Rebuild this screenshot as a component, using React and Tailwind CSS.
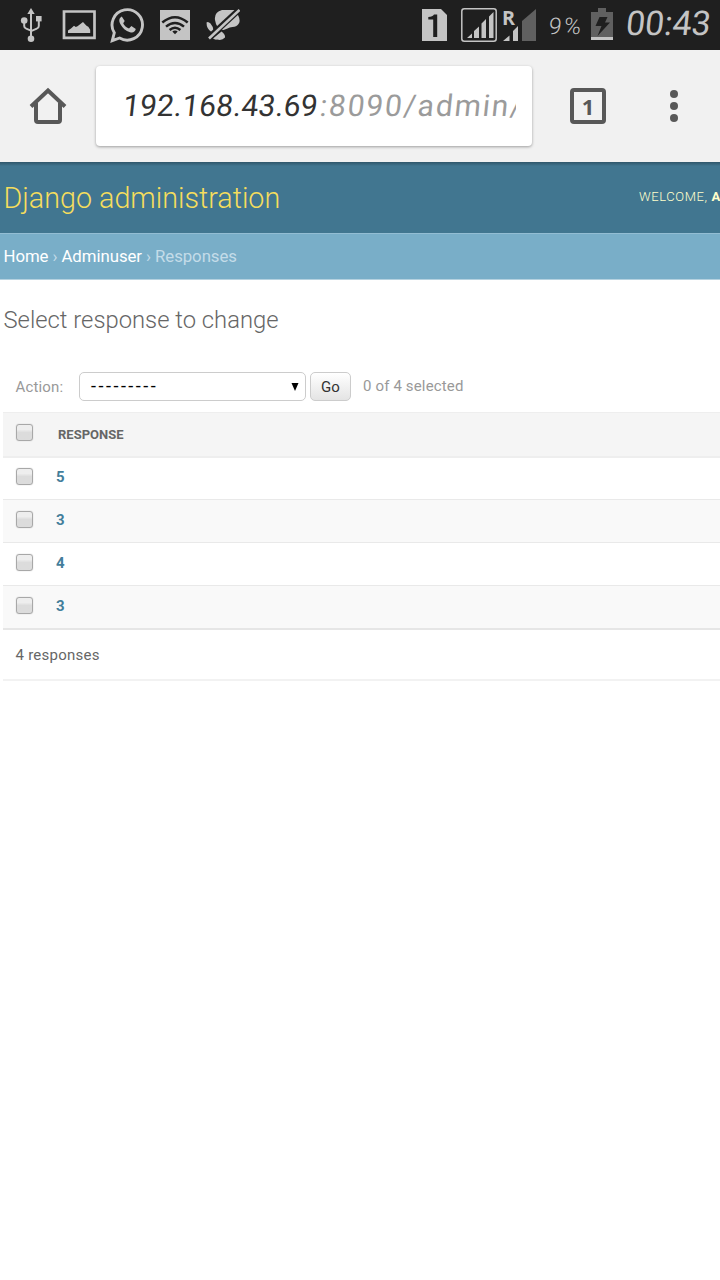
const StatusBar = () => (
  <div className="flex h-[50px] shrink-0 items-center bg-[#1f1f1f] text-[#c4c4c4]">
    <svg className="ml-5 h-[50px] w-[22px] shrink-0" viewBox="20 0 22 50" fill="currentColor">
      <path d="M31 8l3.7 6h-7.4z" />
      <circle cx="31" cy="38.8" r="3.3" />
      <circle cx="24.2" cy="20.5" r="3.3" />
      <rect x="36" y="16" width="5.6" height="5.4" />
      <path d="M31 12v25M24.2 21v5q0 2 2 2.6l4.8 2M38.8 20v6q0 2-2 2.6l-5.8 2.6" fill="none" stroke="currentColor" strokeWidth="2" />
    </svg>
    <svg className="ml-[20px] h-[50px] w-[34px] shrink-0" viewBox="62 0 34 50" fill="currentColor">
      <path d="M64 11.500h30.500v26.300H64z" fill="none" stroke="currentColor" strokeWidth="2.700" />
      <path d="M68 33v-2.500l3-2 3-2.800 1.800 1.200 1.700-.7 5.500-4.200 3.500 3.800 1.800 1 1.900 3V33z" />
    </svg>
    <svg className="ml-[14px] h-[50px] w-[34px] shrink-0" viewBox="110 0 34 50">
      <path d="M112.300 40.700l2-7.900a15.200 15.200 0 1 1 5.300 5.200z" fill="none" stroke="currentColor" strokeWidth="2.900" />
      <path d="M121.800 16.600c-3 1.700-3 4.600-1.500 7.400 2.200 4.100 5.300 6.900 9.700 8.200 3.100.9 5-.3 5.800-3.200l-4.400-3-2.400 2.500c-3-1-5-3.200-5.800-5.300l1.500-2.200z" fill="currentColor" />
    </svg>
    <svg className="ml-4 h-[50px] w-[30px] shrink-0" viewBox="160 0 30 50">
      <rect x="160" y="10" width="30" height="30" fill="currentColor" />
      <g fill="none" stroke="#1f1f1f" strokeWidth="2.500">
        <path d="M162.300 22.500q12.700-10.500 25.400 0M166 26.600q9-7.300 18 0M169.600 30q5.400-4.500 10.800 0" />
      </g>
      <path d="M175 34.200l-2.700-2.600q2.700-2 5.400 0z" fill="#1f1f1f" />
    </svg>
    <svg className="ml-4 h-[50px] w-[34px] shrink-0" viewBox="206 0 34 50" fill="currentColor">
      <path d="M215 20q-1-8 7-10h14q2 1 2 5 3 6 .5 9-2 3-6 3-3 0-5 1.500l-4 1.500q-7 0-8.500-10z" />
      <path d="M206.500 22.500q1.500-1.500 4 1 3 3.500 3 7 0 3-2 1.500-5-3-5-9.500zM213 38.500l8.500-7q4 3 3.500 6-3 3.500-8 2-2 .5-4-1z" />
      <path d="M207 39.500L240 9" stroke="#1f1f1f" strokeWidth="6" />
      <path d="M209 38.500L239.500 10" stroke="currentColor" strokeWidth="2.600" />
    </svg>
    <svg className="ml-[182px] h-[50px] w-[25px] shrink-0" viewBox="422 0 25 50">
      <path d="M422 9h19l6 6v26h-25z" fill="currentColor" />
      <path d="M433.200 37V19.500h-4.900v-2.500q4.500-.3 5.700-2.500h3.200V37z" fill="#1f1f1f" />
    </svg>
    <svg className="ml-[14px] h-[50px] w-[36px] shrink-0" viewBox="461 0 36 50" fill="currentColor">
      <rect x="461.800" y="8.800" width="34.400" height="32.400" rx="2.500" fill="none" stroke="currentColor" strokeWidth="1.500" />
      <path d="M467 38l5-4.500V38zM474 38v-7l5-4.500V38zM481.500 38V23.500l4.500-4.500V38zM489 38V16.500l4.500-4.500V38z" />
    </svg>
    <svg className="ml-[5px] h-[50px] w-[35px] shrink-0" viewBox="502 0 35 50">
      <path d="M522 41V21L536 9v32z" fill="#606060" />
      <path d="M503 41l6.500-5.500v5.500zM513 41V31l5-5v15z" fill="currentColor" />
      <text x="502" y="24.500" fontFamily="Open Sans, sans-serif" fontWeight="700" fontSize="20" textLength="13" lengthAdjust="spacingAndGlyphs" fill="currentColor">R</text>
    </svg>
    <span className="ml-[12px] w-[36px] shrink-0 -skew-x-6 whitespace-nowrap pt-[3px] text-[23px] leading-[50px] font-light tracking-[2.5px]">9%</span>
    <svg className="ml-[6px] h-[50px] w-[22px] shrink-0" viewBox="591 0 22 50">
      <path d="M591 12h7V8h8v4h7v25h-22z" fill="#606060" />
      <path d="M591 37h22v3h-22z" fill="currentColor" />
      <path d="M599.500 17h8l-2.500 5.500h5L597.500 36l4-10h-6z" fill="#1f1f1f" />
    </svg>
    <span className="ml-[13px] shrink-0 -skew-x-6 whitespace-nowrap pb-1 text-[34px] leading-[46px]">00:43</span>
  </div>
);

const BrowserBar = () => (
  <div className="flex h-28 shrink-0 items-start bg-[#f1f1f1] text-[#585858]">
    <svg className="ml-[29px] mt-9 h-10 w-[38px] shrink-0" viewBox="29 86 38 40" fill="none" stroke="currentColor" strokeWidth="4">
      <path d="M31 106.500L48 90.500 65 106.500" />
      <path d="M36 103v17q0 2 2 2h20q2 0 2-2v-17" />
    </svg>
    <div className="ml-[29px] mt-4 flex h-20 w-[436px] shrink-0 items-center overflow-hidden rounded-[4px] bg-white pr-4 pl-[27px] shadow-[0_1px_3px_rgba(0,0,0,0.35)]">
      <div className="w-full overflow-hidden whitespace-nowrap text-[30px] leading-10">
        <div className="flex -skew-x-6">
          <span className="w-[197px] shrink-0 tracking-[0.2px] text-[#333]">192.168.43.69</span>
          <span className="tracking-[1.8px] text-[#9b9b9b]">:8090/admin/</span>
        </div>
      </div>
    </div>
    <div className="ml-[38px] mt-[38px] flex h-9 w-9 shrink-0 items-center justify-center rounded-[4px] border-4 border-[#585858] pb-px font-['Noto_Sans',sans-serif] text-[22px] leading-7 font-bold">1</div>
    <div className="ml-16 mt-10 flex flex-col gap-1">
      <i className="h-2 w-2 rounded-full bg-[#585858]" />
      <i className="h-2 w-2 rounded-full bg-[#585858]" />
      <i className="h-2 w-2 rounded-full bg-[#585858]" />
    </div>
  </div>
);

const CheckBox = () => (
  <span className="h-[17px] w-[17px] shrink-0 rounded-[3px] border border-[#a8a8a8] bg-linear-to-b from-[#eee] from-30% to-[#dcdcdc] to-50% shadow-[0_0_1px_#aaa]" />
);

const rows = [
  { value: "5", cls: "h-[41px] bg-white pb-1" },
  { value: "3", cls: "h-[43px] border-t border-[#e9e9e9] bg-[#f9f9f9] pb-[3px]" },
  { value: "4", cls: "h-[43px] border-t border-[#e9e9e9] bg-white pb-[3px]" },
  { value: "3", cls: "h-[43px] border-t border-[#e9e9e9] bg-[#f9f9f9] pb-[3px]" },
];

export default function App() {
  return (
    <div className="flex h-[1280px] w-[720px] flex-col overflow-hidden bg-white font-[Roboto,sans-serif]">
      <StatusBar />
      <BrowserBar />
      <header className="flex h-[71px] shrink-0 items-center justify-between overflow-hidden bg-linear-to-b from-[#2f566a] to-[#417690] to-[4px] pl-[3.5px]">
        <h1 className="whitespace-nowrap pt-[3px] text-[28.7px] font-light text-[#f5dd5d]">Django administration</h1>
        <div className="w-[81px] shrink-0 overflow-hidden whitespace-nowrap pb-[2px] text-[13px] tracking-[0.6px] font-light text-[#ffc]">
          WELCOME, <b className="font-bold">ADMIN</b>
        </div>
      </header>
      <nav className="flex h-[47px] shrink-0 items-center gap-1 whitespace-nowrap border-t border-b border-t-[#93bdd3] border-b-[#b5d2e0] bg-[#79aec8] pl-[3.5px] pt-px text-[16.8px] tracking-[-0.05px] text-[#c4dce8]">
        <span className="text-white">Home</span>
        <span>›</span>
        <span className="text-white">Adminuser</span>
        <span>›</span>
        <span>Responses</span>
      </nav>
      <main className="flex flex-col pl-[3px]">
        <h2 className="mt-[24px] h-8 whitespace-nowrap pl-[0.5px] text-[23.8px] leading-8 font-light text-[#666]">Select response to change</h2>
        <div className="mt-9 flex h-[29px] items-center whitespace-nowrap pl-[12.5px] text-[15px] tracking-[0.15px] text-[#999]">
          <span className="w-[63.5px] pt-px">Action:</span>
          <div className="flex h-[29px] w-[227px] items-center justify-between rounded-[5px] border border-[#ccc] bg-white pr-[6px] pl-[11px] text-black">
            <span className="pb-[2px] text-[18px] tracking-[2.5px]">---------</span>
            <svg className="h-2 w-2" viewBox="0 0 8 8"><path d="M.5 0h7L4 8z" /></svg>
          </div>
          <div className="ml-1 flex h-[29px] w-[41px] items-center justify-center rounded-[5px] border border-[#ccc] bg-linear-to-b from-white to-[#e4e4e4] pt-px text-[#333]">Go</div>
          <span className="ml-3">0 of 4 selected</span>
        </div>
        <div className="mt-[11px] flex h-[46px] items-center border-t border-b-2 border-[#eee] bg-[#f5f5f5] pl-[13px] pb-1">
          <CheckBox />
          <span className="ml-[25px] pt-1 text-[13px] font-bold text-[#666]">RESPONSE</span>
        </div>
        {rows.map((r, i) => (
          <div key={i} className={`flex items-center pl-[13px] ${r.cls}`}>
            <CheckBox />
            <span className="ml-[23px] pt-[2px] text-[15px] font-bold text-[#447e9b]">{r.value}</span>
          </div>
        ))}
        <div className="flex h-[53px] items-center border-t-2 border-b-2 border-t-[#e6e6e6] border-b-[#f2f2f2] pl-[12.5px] pt-px text-[15px] tracking-[0.25px] text-[#666]">
          4 responses
        </div>
      </main>
    </div>
  );
}
